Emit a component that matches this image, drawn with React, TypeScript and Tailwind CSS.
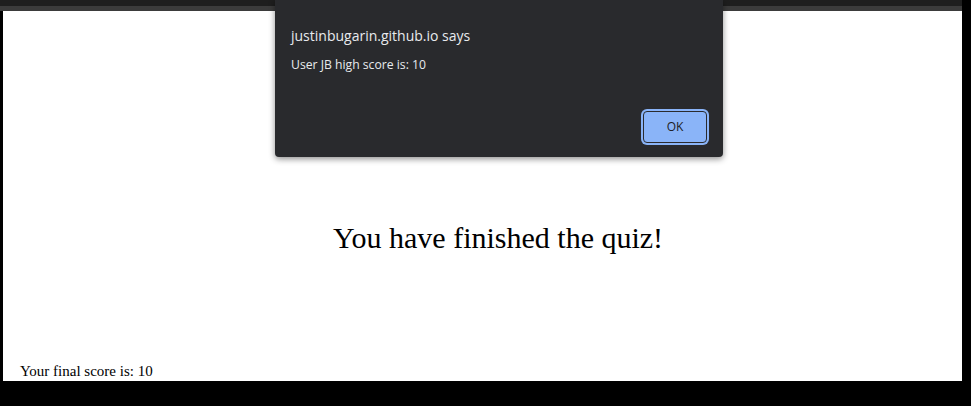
import React from "react";

export default function App() {
  return (
    <div className="relative w-[971px] h-[406px] bg-black overflow-hidden">
      <div className="flex flex-col w-[962px] h-[381px]">
        <div className="h-[11px] flex flex-col">
          <div className="h-[6px] bg-[#1e1e1e]" />
          <div className="h-[5px] bg-[#3b3b3b]" />
        </div>
        <div className="flex-1 flex flex-col ml-[3px] bg-white" style={{ fontFamily: '"Liberation Serif", serif' }}>
          <h1 className="mt-[210px] pl-[31px] text-center text-[30px] leading-[34px] text-black">
            You have finished the quiz!
          </h1>
          <p className="mt-auto mb-[1px] ml-[17px] text-[15px] leading-[17px] text-black">Your final score is: 10</p>
        </div>
      </div>

      <div
        className="absolute left-[275px] top-0 w-[448px] h-[157px] bg-[#292a2d] rounded-b-[4px] shadow-[0_2px_6px_rgba(0,0,0,0.45)] flex flex-col"
        style={{ fontFamily: '"Open Sans", "Noto Sans", sans-serif' }}
      >
        <div className="pl-[16px] pt-[26px] text-[14px] leading-[20px] text-[#e8eaed]">justinbugarin.github.io says</div>
        <div className="pl-[16px] pt-[11px] text-[12.2px] leading-[16px] text-[#e8eaed]">User JB high score is: 10</div>
        <div className="mt-auto mb-[14px] mr-[16px] flex justify-end">
          <button className="w-[64px] h-[32px] rounded-[4px] bg-[#8ab4f8] border border-[#2a2b2e] ring-2 ring-[#8ab4f8] text-[12px] text-[#202124]">
            OK
          </button>
        </div>
      </div>
    </div>
  );
}
